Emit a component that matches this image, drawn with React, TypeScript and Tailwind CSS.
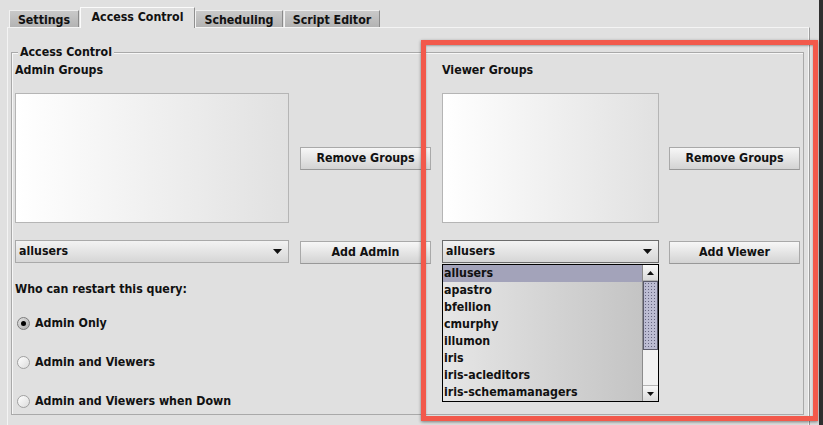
import React from "react";

const font =
  "font-['DejaVu_Sans_Condensed','Liberation_Sans',sans-serif] font-bold text-[12.3px] text-[#111]";

const groups = [
  "allusers",
  "apastro",
  "bfellion",
  "cmurphy",
  "illumon",
  "iris",
  "iris-acleditors",
  "iris-schemamanagers",
];

function Tab({ label, active, className }: { label: string; active?: boolean; className: string }) {
  if (active) {
    return (
      <div
        className={`relative z-10 -mb-px flex h-[21px] items-center justify-center border-l border-t border-r border-l-[#fbfbfb] border-t-[#fbfbfb] border-r-[#8f8f8f] bg-[#e0e0e0] ${className}`}
      >
        <span className="-mt-[1px]">{label}</span>
      </div>
    );
  }
  return (
    <div
      className={`flex h-[17px] items-center justify-center border-l border-t border-r border-l-[#f2f2f2] border-t-[#eeeeee] border-r-[#8a8a8a] bg-linear-to-b from-[#c9c9c9] to-[#b3b3b3] ${className}`}
    >
      <span className="mt-[2px]">{label}</span>
    </div>
  );
}

function MetalButton({ label, className = "" }: { label: string; className?: string }) {
  return (
    <button
      className={`flex h-[23px] w-[131px] items-center justify-center border border-[#a9a9a9] border-b-[#989898] bg-linear-to-b from-[#f7f7f7] to-[#d3d3d3] ${className}`}
    >
      {label}
    </button>
  );
}

function Arrow({ up = false, size = "w-[9px] h-[5px]" }: { up?: boolean; size?: string }) {
  return (
    <svg viewBox="0 0 9 5" className={size}>
      <polygon points={up ? "0,5 9,5 4.5,0" : "0,0 9,0 4.5,5"} fill="#111" />
    </svg>
  );
}

function Combo({ width, focused }: { width: string; focused?: boolean }) {
  return (
    <div
      className={`flex h-[23px] items-center justify-between border bg-linear-to-b from-[#f3f3f3] to-[#d6d6d6] pl-[3px] pr-[6px] ${width} ${
        focused ? "border-[#6c6c6c]" : "border-[#a9a9a9]"
      }`}
    >
      <span>allusers</span>
      <Arrow />
    </div>
  );
}

function GroupList({ width }: { width: string }) {
  return <div className={`h-[130px] border border-[#b5b5b5] bg-linear-to-r from-white to-[#e1e1e1] ${width}`} />;
}

function Radio({ label, checked, className }: { label: string; checked?: boolean; className: string }) {
  return (
    <div className={`flex h-[16px] items-center ${className}`}>
      <div
        className={`ml-[2px] flex h-[13px] w-[13px] items-center justify-center rounded-full border ${
          checked
            ? "border-[#7c7c7c] bg-linear-to-br from-[#e4e4e4] to-[#a9a9a9]"
            : "border-[#a0a0a0] bg-linear-to-br from-white to-[#dcdcdc]"
        }`}
      >
        {checked && <div className="h-[5px] w-[5px] rounded-full bg-black" />}
      </div>
      <span className="ml-[5px]">{label}</span>
    </div>
  );
}

function DropdownPopup() {
  return (
    <div className="absolute left-0 top-[24px] z-20 flex h-[138px] w-[217px] border border-black">
      <div className="flex-1 overflow-hidden bg-linear-to-r from-[#e6e6e6] to-[#c4c4c4]">
        {groups.map((g, i) => (
          <div
            key={g}
            className={`flex h-[17px] items-center pl-[1px] ${i === 0 ? "bg-[#a3a3ba]" : ""}`}
          >
            {g}
          </div>
        ))}
      </div>
      <div className="flex w-[16px] flex-col border-l border-[#8c8c8c] bg-[#ececec]">
        <div className="flex h-[16px] items-center justify-center border-b border-[#b4b4b4] bg-linear-to-b from-[#f8f8f8] to-[#dadada]">
          <Arrow up size="w-[7px] h-[4px]" />
        </div>
        <div className="h-[69px] border border-[#5a5a6a] bg-[#bcbcd2] bg-[radial-gradient(circle,#666680_0.7px,transparent_0.9px)] bg-[length:3px_3px]" />
        <div className="flex-1 bg-[#f2f2f2]" />
        <div className="flex h-[16px] items-center justify-center border-t border-[#b4b4b4] bg-linear-to-b from-[#f8f8f8] to-[#dadada]">
          <Arrow size="w-[7px] h-[4px]" />
        </div>
      </div>
    </div>
  );
}

export default function App() {
  return (
    <div className={`relative flex h-[425px] w-[823px] overflow-hidden bg-[#e0e0e0] ${font}`}>
      <div className="flex w-[819px] flex-col pl-[7px] pt-[7px]">
        <div className="flex h-[20px] items-end pl-[2px]">
          <Tab label="Settings" className="w-[70px]" />
          <Tab label="Access Control" active className="ml-[1px] w-[115px]" />
          <Tab label="Scheduling" className="w-[88px]" />
          <Tab label="Script Editor" className="ml-[1px] w-[96px]" />
        </div>

        <div className="w-[803px] flex-1 border-l border-r border-t border-l-[#f4f4f4] border-r-[#9c9c9c] border-t-[#f4f4f4] pl-[3px] pt-[24px] shadow-[inset_-1px_0_0_#f6f6f6]">
          <div className="w-[793px] border border-[#a9a9a9] pb-[5px] pl-[3px] shadow-[inset_1px_1px_0_#f7f7f7]">
            <div className="-mt-[9px] ml-[3px] w-fit bg-[#e0e0e0] px-[2px] leading-[16px]">Access Control</div>

            <div className="mt-[2px] flex">
              <div className="flex w-[416px] flex-col">
                <div className="h-[16px] leading-[16px]">Admin Groups</div>
                <div className="mt-[15px] flex items-center">
                  <GroupList width="w-[274px]" />
                  <MetalButton label="Remove Groups" className="ml-[11px]" />
                </div>
                <div className="mt-[17px] flex h-[24px] items-start">
                  <Combo width="w-[274px]" />
                  <MetalButton label="Add Admin" className="ml-[11px] mt-[1px]" />
                </div>
                <div className="mt-[17px] h-[16px] leading-[16px]">Who can restart this query:</div>
                <Radio label="Admin Only" checked className="mt-[18px]" />
                <Radio label="Admin and Viewers" className="mt-[23px]" />
                <Radio label="Admin and Viewers when Down" className="mt-[23px]" />
              </div>

              <div className="ml-[11px] flex w-[358px] flex-col">
                <div className="h-[16px] leading-[16px]">Viewer Groups</div>
                <div className="mt-[15px] flex items-center">
                  <GroupList width="w-[217px]" />
                  <MetalButton label="Remove Groups" className="ml-[10px]" />
                </div>
                <div className="mt-[17px] flex h-[24px] items-start">
                  <div className="relative">
                    <Combo width="w-[217px]" focused />
                    <DropdownPopup />
                  </div>
                  <MetalButton label="Add Viewer" className="ml-[10px] mt-[1px]" />
                </div>
              </div>
            </div>
          </div>
        </div>
      </div>
      <div className="w-[4px] bg-[#2f2f2f]" />

      <div className="pointer-events-none absolute left-[421px] top-[40px] z-30 h-[381px] w-[397px] border-[5px] border-[#f2594b] shadow-[0_1px_3px_rgba(0,0,0,0.45),inset_0_1px_2px_rgba(0,0,0,0.3)]" />
    </div>
  );
}
